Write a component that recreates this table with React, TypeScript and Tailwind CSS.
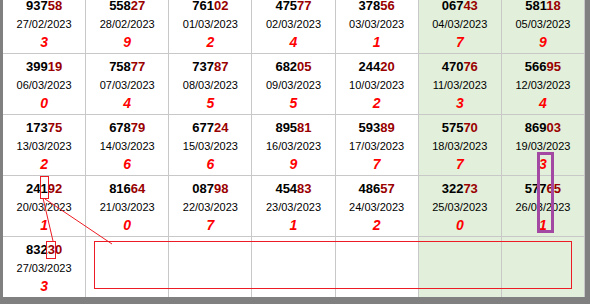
import React from 'react';

type Draw = { num: string; date: string; digit: string };

const rows: (Draw | null)[][] = [
  [
    { num: '93758', date: '27/02/2023', digit: '3' },
    { num: '55827', date: '28/02/2023', digit: '9' },
    { num: '76102', date: '01/03/2023', digit: '2' },
    { num: '47577', date: '02/03/2023', digit: '4' },
    { num: '37856', date: '03/03/2023', digit: '1' },
    { num: '06743', date: '04/03/2023', digit: '7' },
    { num: '58118', date: '05/03/2023', digit: '9' },
  ],
  [
    { num: '39919', date: '06/03/2023', digit: '0' },
    { num: '75877', date: '07/03/2023', digit: '4' },
    { num: '73787', date: '08/03/2023', digit: '5' },
    { num: '68205', date: '09/03/2023', digit: '5' },
    { num: '24420', date: '10/03/2023', digit: '2' },
    { num: '47076', date: '11/03/2023', digit: '3' },
    { num: '56695', date: '12/03/2023', digit: '4' },
  ],
  [
    { num: '17375', date: '13/03/2023', digit: '2' },
    { num: '67879', date: '14/03/2023', digit: '6' },
    { num: '67724', date: '15/03/2023', digit: '6' },
    { num: '89581', date: '16/03/2023', digit: '9' },
    { num: '59389', date: '17/03/2023', digit: '7' },
    { num: '57570', date: '18/03/2023', digit: '7' },
    { num: '86903', date: '19/03/2023', digit: '3' },
  ],
  [
    { num: '24192', date: '20/03/2023', digit: '1' },
    { num: '81664', date: '21/03/2023', digit: '0' },
    { num: '08798', date: '22/03/2023', digit: '7' },
    { num: '45483', date: '23/03/2023', digit: '1' },
    { num: '48657', date: '24/03/2023', digit: '2' },
    { num: '32273', date: '25/03/2023', digit: '0' },
    { num: '57765', date: '26/03/2023', digit: '1' },
  ],
  [{ num: '83230', date: '27/03/2023', digit: '3' }, null, null, null, null, null, null],
];

function Cell({ d, green }: { d: Draw | null; green: boolean }) {
  return (
    <div
      className={`flex flex-col items-center border-r border-b border-[#c8c8c8] pt-[5px] ${
        green ? 'bg-[#e2efda]' : 'bg-white'
      }`}
    >
      {d && (
        <>
          <div className="text-[13px] leading-[16px] font-bold text-black">
            {d.num.slice(0, 3)}
            <span className="text-[#990000]">{d.num.slice(3)}</span>
          </div>
          <div className="mt-[3px] text-[11px] leading-[14px] text-black">{d.date}</div>
          <div className="mt-[3px] text-[14px] leading-[16px] font-bold italic text-[#ff0000]">{d.digit}</div>
        </>
      )}
    </div>
  );
}

export default function App() {
  return (
    <div className="w-[590px] h-[304px] bg-[#808080] pl-[3px] pr-[5px] pb-[7px] font-['Liberation_Sans',Arial,sans-serif]">
      <div className="relative w-[582px] h-[297px] overflow-hidden bg-white">
        <div className="grid grid-cols-7 grid-rows-[repeat(5,61px)] -mt-[7px]">
          {rows.map((row, r) =>
            row.map((d, c) => <Cell key={`${r}-${c}`} d={d} green={c >= 5} />)
          )}
        </div>

        {/* annotations drawn over the table */}
        <svg
          className="absolute left-0 top-0 pointer-events-none"
          width="582"
          height="297"
          viewBox="3 0 582 297"
        >
          <g fill="none" stroke="#ed1c24" strokeWidth="1">
            <rect x="40.5" y="176.5" width="8" height="22" />
            <rect x="46.5" y="241.5" width="9" height="17" />
            <line x1="43" y1="198" x2="53" y2="241" />
            <line x1="45" y1="199" x2="112" y2="244" />
            <rect x="94.5" y="241.5" width="477" height="47" />
          </g>
          <rect x="538.5" y="153.5" width="14" height="78" fill="none" stroke="#a349a4" strokeWidth="3" />
        </svg>
      </div>
    </div>
  );
}
